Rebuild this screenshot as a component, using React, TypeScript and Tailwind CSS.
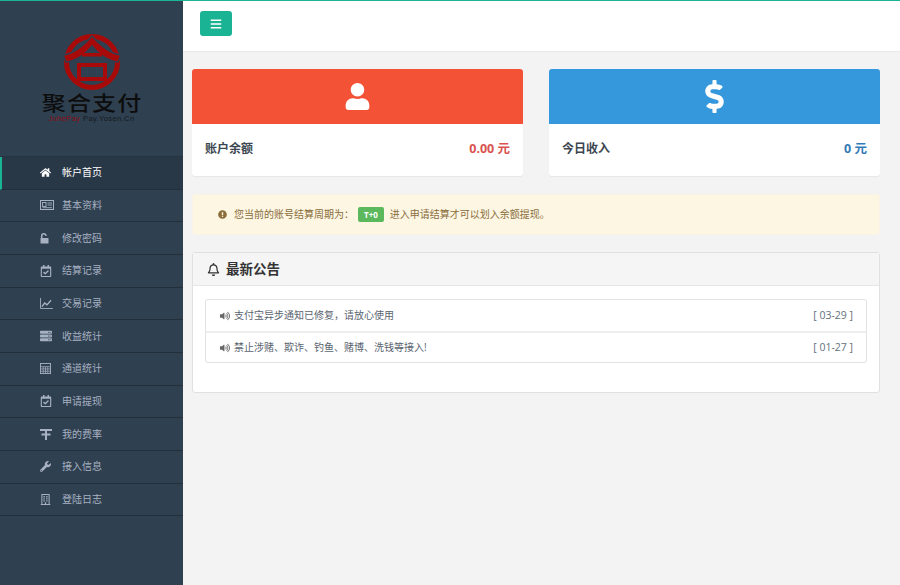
import { FaBars, FaDollarSign, FaExclamationCircle, FaHome, FaRegBell, FaRegBuilding, FaRegCalendarCheck, FaServer, FaUser, FaVolumeUp, FaWrench } from 'react-icons/fa';
import type { ReactNode } from 'react';

const font = 'font-["Open_Sans","Noto_Sans_CJK_SC",sans-serif]';

function CardIcon() {
  return (
    <svg viewBox="0 0 14 10" className="h-[10px] w-[14px]" fill="none" stroke="currentColor">
      <rect x="0.5" y="0.5" width="13" height="9" />
      <rect x="2.5" y="2.5" width="3.5" height="4" strokeWidth="0.9" />
      <path d="M7.5 3h4.5M7.5 5h4.5M2.5 7.7h9.5" strokeWidth="0.9" />
    </svg>
  );
}

function UnlockIcon() {
  return (
    <svg viewBox="0 0 9 11" className="h-[11px] w-[9px]" fill="none" stroke="currentColor">
      <path d="M1.7 5V3a2.2 2.2 0 0 1 4.4 0" strokeWidth="1.5" />
      <rect x="0.5" y="5" width="8" height="5.5" rx="0.6" fill="currentColor" strokeWidth="0" />
    </svg>
  );
}

function ChartIcon() {
  return (
    <svg viewBox="0 0 14 12" className="h-[11px] w-[13px]" fill="none" stroke="currentColor">
      <path d="M0.5 0v11.5h13.5" strokeWidth="1" />
      <path d="M2 9.5L5 5.5L7.5 7.5L12 2.5" strokeWidth="1.5" />
    </svg>
  );
}

function CalcIcon() {
  return (
    <svg viewBox="0 0 12 12" className="h-[11px] w-[11px]" fill="none" stroke="currentColor">
      <rect x="0.5" y="0.5" width="11" height="11" />
      <path d="M0.5 4h11M0.5 6.5h11M0.5 9h11M3.5 4v7.5M6 4v7.5M8.5 4v7.5" strokeWidth="0.8" />
    </svg>
  );
}

function RateIcon() {
  return (
    <svg viewBox="0 0 12 12" className="h-[12px] w-[12px]" fill="none" stroke="currentColor" strokeWidth="2">
      <path d="M0 2h12M1.5 6.5h9M6 2v10" />
    </svg>
  );
}

const menu: { label: string; icon: ReactNode }[] = [
  { label: '帐户首页', icon: <FaHome size={11} /> },
  { label: '基本资料', icon: <CardIcon /> },
  { label: '修改密码', icon: <UnlockIcon /> },
  { label: '结算记录', icon: <FaRegCalendarCheck size={12} /> },
  { label: '交易记录', icon: <ChartIcon /> },
  { label: '收益统计', icon: <FaServer size={12} /> },
  { label: '通道统计', icon: <CalcIcon /> },
  { label: '申请提现', icon: <FaRegCalendarCheck size={12} /> },
  { label: '我的费率', icon: <RateIcon /> },
  { label: '接入信息', icon: <FaWrench size={11} /> },
  { label: '登陆日志', icon: <FaRegBuilding size={11} /> },
];

const notices = [
  { text: '支付宝异步通知已修复，请放心使用', date: '[ 03-29 ]' },
  { text: '禁止涉赌、欺诈、钓鱼、赌博、洗钱等接入!', date: '[ 01-27 ]' },
];

function Logo() {
  return (
    <div className='flex flex-col items-center pt-[33px] font-["Liberation_Sans","Noto_Sans_CJK_SC",sans-serif]'>
      <svg viewBox="0 0 56 56" className="h-[56px] w-[56px]" fill="none">
        <circle cx="28" cy="28" r="25.5" stroke="#a80a0a" strokeWidth="5" />
        <path d="M-1 21C9 20 20 11 28 2C36 11 47 20 57 21L54 28C44 27 34 20 28 12C22 20 12 27 2 28Z" fill="#a80a0a" stroke="#2f4050" strokeWidth="1.5" />
        <rect x="18" y="19" width="20" height="3.5" fill="#a80a0a" />
        <rect x="15" y="31" width="26" height="14" stroke="#a80a0a" strokeWidth="4" />
      </svg>
      <div className="mt-[4px] scale-x-[1.2] pl-[1px] text-[20px] leading-[20px] font-medium tracking-[1px] text-[#0d0d0d]">聚合支付</div>
      <div className="mt-[1px] text-[7.5px] leading-[8px] tracking-[0.4px]">
        <span className="text-[#8a0d12]">JuhePay </span>
        <span className="text-[#14191e]">Pay.Yosen.Cn</span>
      </div>
    </div>
  );
}

function StatCard({ color, icon, label, value, valueColor }: { color: string; icon: ReactNode; label: string; value: string; valueColor: string }) {
  return (
    <div className="h-[107px] flex-1 overflow-hidden rounded-[3px] bg-white shadow-[0_1px_1px_rgba(0,0,0,0.05)]">
      <div className={`flex h-[55px] items-center justify-center text-white ${color}`}>{icon}</div>
      <div className="flex items-center justify-between px-[13px] pt-[16px]">
        <span className="text-[12px] leading-[17px] font-bold text-[#3c4650]">{label}</span>
        <span className={`text-[12.5px] leading-[17px] font-bold ${valueColor}`}>{value}</span>
      </div>
    </div>
  );
}

export default function App() {
  return (
    <div className={`flex h-[585px] flex-col overflow-hidden bg-[#f3f3f4] ${font}`}>
      <div className="h-px shrink-0 bg-[#1ab394]" />
      <div className="flex min-h-0 flex-1">
        <aside className="w-[183px] shrink-0 bg-[#2f4050]">
          <div className="h-[155px]">
            <Logo />
          </div>
          <ul className="border-t border-[#263442]">
            {menu.map((item, i) => (
              <li
                key={item.label}
                className={`flex h-[32.66px] items-center border-b border-[#232f3b] text-[10px] ${i === 0 ? 'border-l-2 border-l-[#1ab394] bg-[#293846] pl-[38px] text-white' : 'pl-[40px] text-[#a7b1c2]'}`}
              >
                <span className="flex w-[22px] shrink-0 items-center">{item.icon}</span>
                {item.label}
              </li>
            ))}
          </ul>
        </aside>

        <main className="min-w-0 flex-1">
          <header className="h-[51px] border-b border-[#e7eaec] bg-white pt-[10px] pl-[17px]">
            <button className="flex h-[25px] w-[32px] items-center justify-center rounded-[3px] bg-[#1ab394] text-white">
              <FaBars size={12} />
            </button>
          </header>

          <div className="px-[9px] pt-[17px] pr-[20px]">
            <div className="flex gap-[26px]">
              <StatCard color="bg-[#f35237]" icon={<FaUser size={27} />} label="账户余额" value="0.00 元" valueColor="text-[#d9534f]" />
              <StatCard color="bg-[#3598dc]" icon={<FaDollarSign size={33} />} label="今日收入" value="0 元" valueColor="text-[#337ab7]" />
            </div>

            <div className="mt-[18px] flex h-[41px] items-center rounded-[3px] border border-[#f8f3e4] bg-[#fcf6e3] pl-[25px] text-[10px] text-[#8a6d3b]">
              <FaExclamationCircle size={9} className="mr-[7px]" />
              <span className="w-[124px]">您当前的账号结算周期为：</span>
              <span className="mr-[6px] rounded-[2px] bg-[#5cb85c] px-[6px] text-[8px] leading-[15px] font-bold text-white">T+0</span>
              <span>进入申请结算才可以划入余额提现。</span>
            </div>

            <section className="mt-[17px] h-[141px] rounded-[3px] border border-[#e0e0e0] bg-white">
              <div className="flex h-[33px] items-center gap-[6px] border-b border-[#e5e5e5] bg-[#f5f5f5] pl-[14px] text-[#333]">
                <FaRegBell size={13} />
                <h2 className="text-[13.5px] font-bold">最新公告</h2>
              </div>
              <ul className="mx-[12px] mt-[13px] rounded-[3px] border border-[#e3e3e3]">
                {notices.map((n, i) => (
                  <li key={n.text} className={`flex h-[31px] items-center justify-between pr-[13px] pl-[14px] text-[10px] text-[#5a6470] ${i > 0 ? 'border-t-2 border-[#eeeeee]' : ''}`}>
                    <span className="flex items-center gap-[4px]">
                      <FaVolumeUp size={10} className="text-[#666]" />
                      {n.text}
                    </span>
                    <span className="text-[10.5px] text-[#66707c]">{n.date}</span>
                  </li>
                ))}
              </ul>
            </section>
          </div>
        </main>
      </div>
    </div>
  );
}
